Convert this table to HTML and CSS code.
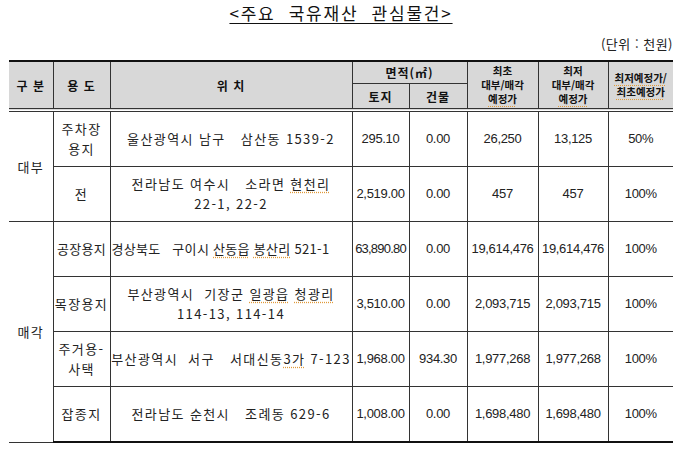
FILE: index.html
```html
<!DOCTYPE html>
<html lang="ko">
<head>
<meta charset="utf-8">
<link rel="stylesheet" href="styles.css">
</head>
<body>
<div class="page">
  <h1 class="title">&lt;주요&nbsp; 국유재산&nbsp; 관심물건&gt;</h1>
  <p class="unit">(단위 : 천원)</p>
  <table class="grid">
    <colgroup>
      <col class="c1"><col class="c2"><col class="c3"><col class="c4"><col class="c5"><col class="c6"><col class="c7"><col class="c8">
    </colgroup>
    <thead>
      <tr class="h1">
        <th rowspan="2" class="first">구 분</th>
        <th rowspan="2">용 도</th>
        <th rowspan="2">위 치</th>
        <th colspan="2">면적(㎡)</th>
        <th rowspan="2" class="multi">최초<br>대부/매각<br><span class="sp">예정가</span></th>
        <th rowspan="2" class="multi">최저<br>대부/매각<br><span class="sp">예정가</span></th>
        <th rowspan="2" class="multi last"><span class="sp">최저예정가/</span><br><span class="sp">최초예정가</span></th>
      </tr>
      <tr class="h2">
        <th>토지</th>
        <th>건물</th>
      </tr>
    </thead>
    <tbody>
      <tr>
        <td rowspan="2" class="first grp">대부</td>
        <td>주차장<br>용지</td>
        <td>울산광역시 남구&nbsp;&nbsp; 삼산동 1539-2</td>
        <td class="num">295.10</td>
        <td class="num">0.00</td>
        <td class="num">26,250</td>
        <td class="num">13,125</td>
        <td class="num last">50%</td>
      </tr>
      <tr class="sep">
        <td>전</td>
        <td>전라남도 여수시&nbsp;&nbsp; 소라면 <span class="sp">현천리</span><br>22-1, 22-2</td>
        <td class="num">2,519.00</td>
        <td class="num">0.00</td>
        <td class="num">457</td>
        <td class="num">457</td>
        <td class="num last">100%</td>
      </tr>
      <tr>
        <td rowspan="4" class="first grp">매각</td>
        <td class="tight">공장용지</td>
        <td class="tight left">경상북도&nbsp;&nbsp; 구이시 <span class="sp">산동읍</span> <span class="sp">봉산리</span> 521-1</td>
        <td class="num tightnum">63,890.80</td>
        <td class="num">0.00</td>
        <td class="num">19,614,476</td>
        <td class="num">19,614,476</td>
        <td class="num last">100%</td>
      </tr>
      <tr>
        <td>목장용지</td>
        <td>부산광역시&nbsp; 기장군 <span class="sp">일광읍</span> <span class="sp">청광리</span><br>114-13, 114-14</td>
        <td class="num">3,510.00</td>
        <td class="num">0.00</td>
        <td class="num">2,093,715</td>
        <td class="num">2,093,715</td>
        <td class="num last">100%</td>
      </tr>
      <tr>
        <td>주거용-<br>사택</td>
        <td>부산광역시&nbsp; 서구&nbsp;&nbsp; 서대신동<span class="sp">3가</span> 7-123</td>
        <td class="num">1,968.00</td>
        <td class="num">934.30</td>
        <td class="num">1,977,268</td>
        <td class="num">1,977,268</td>
        <td class="num last">100%</td>
      </tr>
      <tr class="end">
        <td>잡종지</td>
        <td>전라남도 순천시&nbsp;&nbsp; 조례동 629-6</td>
        <td class="num">1,008.00</td>
        <td class="num">0.00</td>
        <td class="num">1,698,480</td>
        <td class="num">1,698,480</td>
        <td class="num last">100%</td>
      </tr>
    </tbody>
  </table>
</div>
</body>
</html>
```

FILE: styles.css
```css
html, body {
  margin: 0;
  padding: 0;
  background: #ffffff;
}

.page {
  padding: 3px 7px 0 9px;
  font-family: "Noto Sans CJK KR", "Noto Sans", sans-serif;
  color: #222;
}

.title {
  margin: 0;
  text-align: center;
  font-size: 17px;
  font-weight: normal;
  line-height: 20px;
  text-decoration: underline;
  text-decoration-thickness: 1px;
  text-underline-offset: 3px;
  letter-spacing: 1.8px;
  word-spacing: 0;
  color: #111;
}

.unit {
  margin: 13px 0 0 0;
  text-align: right;
  font-size: 13px;
  line-height: 16px;
  letter-spacing: 0.5px;
  color: #222;
}

.grid {
  margin-top: 8px;
  width: 664px;
  border-collapse: collapse;
  table-layout: fixed;
}

.c1 { width: 44px; }
.c2 { width: 57px; }
.c3 { width: 242px; }
.c4 { width: 57px; }
.c5 { width: 58px; }
.c6 { width: 71px; }
.c7 { width: 70px; }
.c8 { width: 65px; }

.grid th,
.grid td {
  border-left: 1px solid #333;
  border-right: 1px solid #333;
  padding: 0;
  text-align: center;
  vertical-align: middle;
  white-space: nowrap;
}

.grid .first { border-left: none; }
.grid .last { border-right: none; }

.grid th {
  background: #d8d8d8;
  font-weight: bold;
  font-size: 12px;
  color: #111;
  letter-spacing: 1px;
}

.grid thead tr.h1 th {
  border-top: 2px solid #111;
  border-bottom: 4px double #333;
}

.grid thead tr.h1 th[colspan] {
  border-bottom: 1px solid #333;
  height: 21px;
}

.grid thead tr.h2 th {
  border-bottom: 4px double #333;
  height: 24px;
}

.grid th.multi {
  line-height: 14px;
  font-size: 10.5px;
  letter-spacing: 0;
}

.grid td {
  height: 54px;
  font-size: 13px;
  line-height: 20px;
  letter-spacing: 1.4px;
  border-bottom: 1px solid #333;
  color: #222;
}

.grid tr.end td {
  border-bottom: 2px solid #111;
}

.grid td.num {
  font-family: "Liberation Sans", Arial, sans-serif;
  font-size: 13px;
  letter-spacing: -0.3px;
}

.grid td.tight {
  letter-spacing: 0.3px;
}

.grid td.tightnum {
  letter-spacing: -0.8px;
}

.grid td.left {
  text-align: left;
  padding-left: 1px;
  overflow: visible;
}

.sp {
  text-decoration: underline dotted #e09a3a;
  text-underline-offset: 3px;
}
```
